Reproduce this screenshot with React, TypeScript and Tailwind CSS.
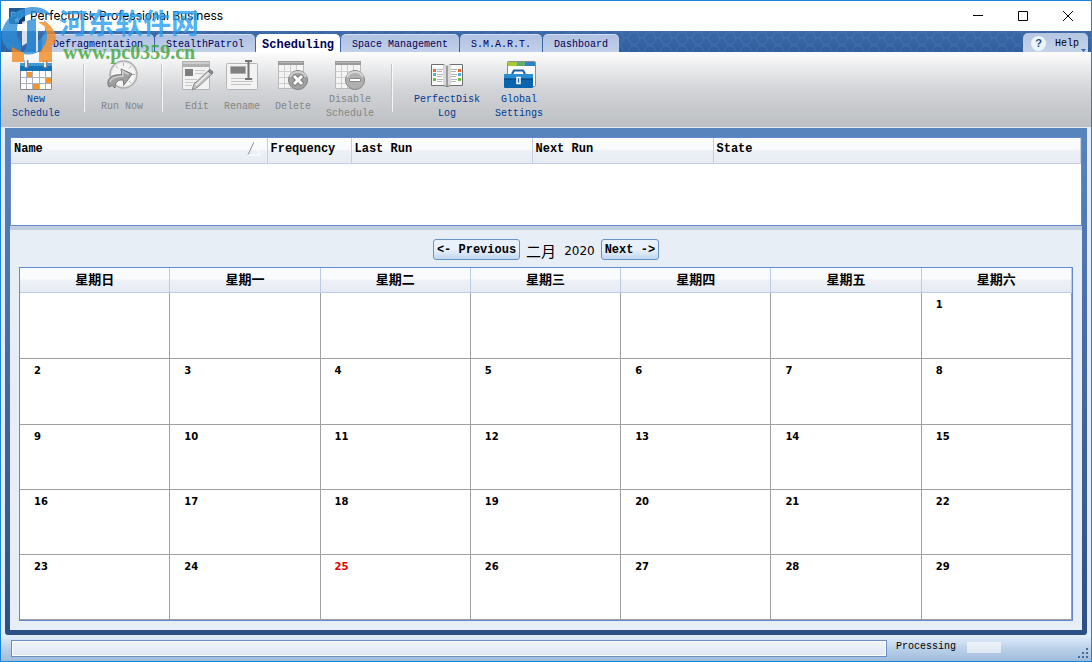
import type { ReactNode } from "react";
import clsx from "clsx";

const tabs = ["Defragmentation", "StealthPatrol", "Scheduling", "Space Management", "S.M.A.R.T.", "Dashboard"];
const weekdays = ["星期日", "星期一", "星期二", "星期三", "星期四", "星期五", "星期六"];
const columns = [
  { label: "Name", width: "w-[256px]" },
  { label: "Frequency", width: "w-[84px]" },
  { label: "Last Run", width: "w-[181px]" },
  { label: "Next Run", width: "w-[181px]" },
  { label: "State", width: "" },
];

// February 2020 starts on a Saturday
const weeks = [0, 1, 2, 3, 4].map((w) => weekdays.map((_, d) => w * 7 + d - 5));
const today = 25;

const headFill = "bg-linear-to-b from-[#fafbfd] from-45% via-[#eef2f7] via-50% to-[#e6ebf3]";

function CalendarSheet() {
  return (
    <>
      <path d="M2.500 3.500h25v25h-25z" fill="#f4f4f4" stroke="#b9b9b9" />
      <path d="M2 1h26v4H2z" fill="#9a9a9a" />
      <path d="M3 2h24v1H3z" fill="#b9b9b9" />
      <path d="M3 11.500h24M3 17.500h24M3 23.500h24M8.500 5v23M14.500 5v23M20.500 5v23" stroke="#cfcfcf" />
    </>
  );
}

function NewIcon() {
  return (
    <svg width="34" height="32" viewBox="0 0 34 32">
      <path d="M1.500 7h31v22.500h-31z" fill="#fff" stroke="#8b8b8b" />
      <path d="M1 3h32v8H1z" fill="#1272b8" />
      <path d="M1 3h32v3H1z" fill="#3f9bd6" />
      <path d="M2 17.500h30M2 23.500h30M7.500 11v18M13.500 11v18M20.500 11v18M26.500 11v18" stroke="#a9b3bd" />
      <path d="M8 12h5v5H8zM27 18h5v5h-5zM14 24h6v5h-6z" fill="#f7942a" />
      <path d="M7.500 0v8M26.500 0v8" stroke="#7d848b" strokeWidth="4" />
      <path d="M7 0v7M26 0v7" stroke="#e8ebee" strokeWidth="2" />
    </svg>
  );
}

function RunIcon() {
  return (
    <svg width="34" height="32" viewBox="0 0 34 32">
      <circle cx="18.500" cy="14.500" r="13.500" fill="#e2e2e2" stroke="#b0b0b0" strokeWidth="1.500" />
      <circle cx="18.500" cy="14.500" r="11.500" fill="#f5f5f5" />
      <path d="M18.500 3v3M18.500 23v3M27 14.500h3M11 6l2 2.500M26 23l-2-2M26 6l-2 2.500" stroke="#b0b0b0" />
      <path d="M4 27C1 22 4 16 11 15l6-.5-1-5.500 11 5-8 11-1-5c-5-.5-8 2-8 8l-3-2.500z" fill="#a0a0a0" stroke="#757575" />
      <path d="M5 22c1-4 5-5.500 13-6l-.5-5 6 3.500" stroke="#cfcfcf" strokeWidth="1.500" fill="none" />
    </svg>
  );
}

function EditIcon() {
  return (
    <svg width="34" height="32" viewBox="0 0 34 32">
      <path d="M2.500 2.500h27v27h-27z" fill="#f2f2f2" stroke="#b5b5b5" />
      <path d="M2 1h28v6H2z" fill="#b0b0b0" />
      <path d="M3 2h26v2H3z" fill="#cdcdcd" />
      <path d="M5 9h8v7H5z" fill="#7d7d7d" />
      <path d="M15 10.500h10M15 13.500h9M5 19.500h12M5 22.500h10M5 25.500h7" stroke="#c9c9c9" />
      <path d="M12 30l2-6 14-13 4 3-14 13z" fill="#c4c4c4" stroke="#8a8a8a" />
      <path d="M28 11l2-1.500 3 2.500-1 2z" fill="#8d8d8d" stroke="#777" />
      <path d="M16 25l13-12" stroke="#efefef" strokeWidth="1.500" />
    </svg>
  );
}

function RenameIcon() {
  return (
    <svg width="34" height="32" viewBox="0 0 34 32">
      <rect x="1.500" y="3.500" width="31" height="26" rx="1" fill="#f3f3f3" stroke="#b5b5b5" />
      <path d="M5.500 6.500h15v7h-15z" fill="#808080" stroke="#b0b0b0" />
      <path d="M6 18.500h22M6 21.500h22M6 24.500h20" stroke="#c4c4c4" />
      <path d="M20 1h7M23.500 1v18M20 19h7" stroke="#757575" strokeWidth="2" fill="none" />
    </svg>
  );
}

function DeleteIcon() {
  return (
    <svg width="34" height="32" viewBox="0 0 34 32">
      <CalendarSheet />
      <circle cx="22" cy="20" r="9.500" fill="#a2a2a2" stroke="#808080" />
      <path d="M14 17a9 9 0 0 1 16 0" stroke="#cfcfcf" strokeWidth="2" fill="none" />
      <path d="M17.500 15.500l9 9M26.500 15.500l-9 9" stroke="#7b7b7b" strokeWidth="5" />
      <path d="M18 16l8 8M26 16l-8 8" stroke="#fff" strokeWidth="3" />
    </svg>
  );
}

function DisableIcon() {
  return (
    <svg width="34" height="32" viewBox="0 0 34 32">
      <CalendarSheet />
      <circle cx="22" cy="20" r="9.500" fill="#b0b0b0" stroke="#858585" />
      <path d="M14 17a9 9 0 0 1 16 0" stroke="#d5d5d5" strokeWidth="2" fill="none" />
      <path d="M16.500 18.500h11v3h-11z" fill="#fff" stroke="#8a8a8a" />
    </svg>
  );
}

function LogIcon() {
  return (
    <svg width="34" height="32" viewBox="0 0 34 32">
      <path d="M1.500 4.500h12l3.500 2 3.500-2h12v21h-12l-3.500 1-3.500-1h-12z" fill="#fbfbfb" stroke="#707070" />
      <path d="M13 5h3v20h-3zM18 5h3v20h-3z" fill="#d9d9d9" />
      <path d="M16 6h2v20h-2z" fill="#9b9b9b" />
      <path d="M7 9.500h6M7 11.500h5M7 14.500h6M7 16.500h5M7 19.500h6M7 21.500h5M21 9.500h6M21 11.500h5M21 14.500h6M21 16.500h5M21 19.500h6M21 21.500h5" stroke="#b5b5b5" />
      <path d="M3 9h3v3H3zM28 9h3v3h-3z" fill="#ee6a33" />
      <path d="M3 13h3v3H3zM28 13h3v3h-3z" fill="#4fb2dd" />
      <path d="M3 18h3v3H3zM28 18h3v3h-3z" fill="#6dba3f" />
    </svg>
  );
}

function SettingsIcon() {
  return (
    <svg width="34" height="32" viewBox="0 0 34 32">
      <rect x="5.500" y="1.500" width="28" height="25" rx="1" fill="#fafafa" stroke="#8c8c8c" />
      <path d="M6 2h12v4H6z" fill="#a9c833" />
      <path d="M15 2h9v4h-9z" fill="#5fae6f" />
      <path d="M23 2h10v4H23z" fill="#2f83c4" />
      <path d="M10 14l2-3.500h9l2 3.500" stroke="#1e5f9d" strokeWidth="2" fill="none" />
      <rect x="2" y="14" width="29" height="14" rx="1" fill="#0a63ad" />
      <path d="M2 14h29v4H2z" fill="#2c8cd0" />
      <path d="M2 19h29v1H2z" fill="#084d89" />
      <path d="M15 17.500h3v6h-3z" fill="#2a6da8" stroke="#fff" strokeWidth="1.500" />
    </svg>
  );
}

type ToolProps = { label: string[]; icon: ReactNode; width: string; disabled?: boolean };

function Tool({ label, icon, width, disabled }: ToolProps) {
  return (
    <button
      disabled={disabled}
      className={clsx("flex shrink-0 flex-col items-center", width, disabled ? "text-[#858585]" : "text-[#003a95]")}
    >
      {icon}
      <span className="mt-px flex h-7 flex-col justify-center text-[10px] leading-[14px]">
        {label.map((line) => (
          <span key={line}>{line}</span>
        ))}
      </span>
    </button>
  );
}

function Separator({ className }: { className: string }) {
  return <div className={clsx("mt-1 h-12 w-[2px] shrink-0 border-l border-[#c3c5c9] bg-white/80", className)} />;
}

function TitleBar() {
  return (
    <header className="flex h-[30px] items-center bg-white pl-2">
      <svg width="16" height="16" viewBox="0 0 16 16" className="shrink-0">
        <rect width="16" height="16" rx="2" fill="#12406f" />
        <path d="M0 0h16v7L0 11z" fill="#1f5a92" />
        <path d="M2.500 10V4.500h3q2 2 0 3h-3M9 4v6h2.500q3-3 0-6z" stroke="#57a3dc" strokeWidth="1.500" fill="none" />
        <path d="M8 9l1 2 2 .3-1.500 1.400.4 2L8 13.700l-2 1 .4-2L5 11.300l2-.3z" fill="#dbe9f5" />
      </svg>
      <h1 className="ml-[5px] flex-1 font-['Inter',sans-serif] text-xs text-black">PerfectDisk Professional Business</h1>
      <button aria-label="Minimize" className="flex h-full w-[45px] items-center justify-center">
        <svg width="10" height="10" viewBox="0 0 10 10" stroke="#000">
          <path d="M0 4.500h10" />
        </svg>
      </button>
      <button aria-label="Maximize" className="flex h-full w-[45px] items-center justify-center">
        <svg width="10" height="10" viewBox="0 0 10 10" stroke="#000" fill="none">
          <path d="M.5.5h9v9h-9z" />
        </svg>
      </button>
      <button aria-label="Close" className="flex h-full w-[46px] items-center justify-center">
        <svg width="10" height="10" viewBox="0 0 10 10" stroke="#000">
          <path d="M0 0l10 10M10 0L0 10" />
        </svg>
      </button>
    </header>
  );
}

function TabBar() {
  return (
    <nav className="relative flex h-[21px] items-end bg-linear-to-b from-[#3b69a8] to-[#305f9f] pl-[41px]">
      <svg className="absolute inset-0 h-full w-full" aria-hidden="true">
        <defs>
          <pattern id="hex" width="16" height="14" patternUnits="userSpaceOnUse">
            <path d="M0 7h3l3-6h6l3 6h1M3 7l3 6h6l3-6" fill="none" stroke="#5485bd" strokeOpacity=".35" />
          </pattern>
        </defs>
        <rect width="100%" height="100%" fill="url(#hex)" />
      </svg>
      <div role="tablist" className="relative flex flex-1 items-end gap-px">
        {tabs.map((tab) => {
          const active = tab === "Scheduling";
          return (
            <button
              key={tab}
              role="tab"
              aria-selected={active}
              className={clsx(
                "h-[18px] shrink-0 rounded-t-[5px] border-t leading-5 text-[#00005a]",
                active
                  ? "border-white bg-white px-[6px] text-xs font-bold"
                  : "border-[#d5dff0] bg-linear-to-b from-[#b0c2e2] to-[#c2d0e9] px-[11px] text-[10px]"
              )}
            >
              {tab}
            </button>
          );
        })}
      </div>
      <button className="relative mr-[3px] flex h-[19px] w-[65px] items-center rounded-t-[5px] bg-linear-to-b from-[#b6c6e2] to-[#c5d2e8] pt-px pl-2 text-[10px] text-black">
        <span className="flex size-[15px] items-center justify-center rounded-full bg-[#edf5fc] font-['Liberation_Sans',sans-serif] text-[11px] font-bold text-[#1f4f85]">
          ?
        </span>
        <span className="ml-[9px]">Help</span>
        <svg width="5" height="3" viewBox="0 0 5 3" className="mt-auto ml-[2px]">
          <path d="M0 0h5L2.500 3z" fill="#2e66ae" />
        </svg>
      </button>
    </nav>
  );
}

function Toolbar() {
  return (
    <div className="flex h-[75px] bg-linear-to-b from-[#fdfdfd] via-[#d2d4d7] via-50% to-[#bcbfc3] pt-2">
      <Tool label={["New", "Schedule"]} icon={<NewIcon />} width="w-[70px]" />
      <Separator className="ml-3" />
      <Tool label={["Run Now"]} icon={<RunIcon />} width="w-[74px]" disabled />
      <Separator className="mr-3 ml-[2px]" />
      <Tool label={["Edit"]} icon={<EditIcon />} width="w-[44px]" disabled />
      <Tool label={["Rename"]} icon={<RenameIcon />} width="w-[46px]" disabled />
      <Tool label={["Delete"]} icon={<DeleteIcon />} width="w-[56px]" disabled />
      <Tool label={["Disable", "Schedule"]} icon={<DisableIcon />} width="w-[58px]" disabled />
      <Separator className="mr-[14px] ml-3" />
      <Tool label={["PerfectDisk", "Log"]} icon={<LogIcon />} width="w-[80px]" />
      <Tool label={["Global", "Settings"]} icon={<SettingsIcon />} width="w-[64px]" />
    </div>
  );
}

function ScheduleList() {
  return (
    <div className="h-[89px] border border-[#6489cf] bg-white">
      <table className="w-full table-fixed border-collapse">
        <thead>
          <tr>
            {columns.map((col) => (
              <th
                key={col.label}
                className={clsx(
                  "h-[25px] border-r border-b border-[#c3d0e2] pb-[2px] pl-[3px] text-left text-xs leading-4 font-bold",
                  headFill,
                  col.width
                )}
              >
                <span className="flex items-center justify-between">
                  {col.label}
                  {col.label === "Name" && (
                    <svg width="14" height="14" viewBox="0 0 14 14" className="mr-[6px]" fill="none">
                      <path d="M1 13L7 0" stroke="#8f8f8f" />
                      <path d="M7 0l6 13H1" stroke="#fff" />
                    </svg>
                  )}
                </span>
              </th>
            ))}
          </tr>
        </thead>
      </table>
    </div>
  );
}

function Calendar() {
  const navButton =
    "h-[21px] rounded-[3px] border border-[#6494c6] bg-linear-to-b from-[#e8f1fc] from-50% to-[#c3d7f0] px-[3px] pt-px text-xs font-bold text-black";
  return (
    <section className="flex-1 border-t-4 border-[#c0cde1] bg-[#e8eef6] px-[9px] pb-[9px]">
      <div className="flex h-[37px] items-center justify-center gap-[6px] pt-[2px]">
        <button className={navButton}>&lt;- Previous</button>
        <h2 className="flex items-center gap-2 pt-[2px] font-['Noto_Sans_CJK_SC',sans-serif] text-[15px] leading-5 font-normal">
          二月 <span className="font-['DejaVu_Sans',sans-serif] text-xs">2020</span>
        </h2>
        <button className={navButton}>Next -&gt;</button>
      </div>
      <table className="w-full table-fixed border-separate border-spacing-0 border border-[#6489cf] bg-white">
        <thead>
          <tr>
            {weekdays.map((day) => (
              <th
                key={day}
                className={clsx(
                  "h-[25px] border-r border-b border-[#bccde3] pt-[2px] text-[13px] leading-5 font-bold",
                  headFill
                )}
              >
                {day}
              </th>
            ))}
          </tr>
        </thead>
        <tbody>
          {weeks.map((week, w) => (
            <tr key={w} className={w < 2 ? "h-[66px]" : "h-[65px]"}>
              {week.map((day, d) => (
                <td
                  key={d}
                  className={clsx(
                    "border-r border-b border-[#a0a0a0] pt-1 pl-[14px] align-top font-['DejaVu_Sans',sans-serif] text-[10px] leading-4 font-bold",
                    day === today && "text-[#e60000]"
                  )}
                >
                  {day > 0 && day}
                </td>
              ))}
            </tr>
          ))}
        </tbody>
      </table>
    </section>
  );
}

function StatusBar() {
  return (
    <footer className="flex h-[26px] items-center bg-linear-to-b from-[#e3effb] via-[#bcd2ea] to-[#9fbcdc] pl-[10px]">
      <div
        role="progressbar"
        aria-label="Progress"
        className="h-[17px] flex-1 border border-[#6c8ebf] bg-linear-to-b from-[#f2f5fa] to-[#dfe7f3] shadow-[inset_0_0_0_1px_white]"
      />
      <span className="mb-[2px] ml-[9px] text-[10px] leading-4">Processing</span>
      <div className="mb-[2px] ml-[11px] h-[11px] w-[34px] bg-linear-to-b from-[#eef3fa] to-[#dfe7f2]" />
      <svg width="10" height="10" viewBox="0 0 10 10" className="mt-auto mr-[3px] mb-[3px] ml-[77px]" fill="#4c6a94">
        <path d="M8 0h2v2H8zM4 4h2v2H4zM8 4h2v2H8zM0 8h2v2H0zM4 8h2v2H4zM8 8h2v2H8z" />
      </svg>
    </footer>
  );
}

function SiteBadge() {
  return (
    <div className="pointer-events-none absolute top-0 left-0 flex">
      <svg width="58" height="64" viewBox="0 0 58 64" opacity=".8" className="shrink-0">
        <path d="M20 14C8 18-1 27 1 37c1 9 8 14 19 16V41c-6-4-5-17 0-27z" fill="#2b8ed8" />
        <path d="M1 30C6 13 23 3 40 7c6 2 9 5 11 9C39 8 21 12 8 28z" fill="#2b8ed8" />
        <path d="M26 20l9-3v24c9-5 11-15 8-22 11 9 8 27-8 33-5 2-10 2-15 0 3-2 6-5 6-9z" fill="#2b8ed8" />
        <path d="M11 46l12 6v9H11zM37 21h8c7 5 11 12 10 21l-4 2v17H38V51c9-7 10-19 5-26z" fill="#f28a24" />
        <path d="M21 21l5-2v23l-5 3zM35 17l2-1v34l-2 1z" fill="#fff" />
      </svg>
      <div className="pt-[9px] whitespace-nowrap">
        <p className="text-[28px] leading-[33px] font-bold text-[#2a9ff0] opacity-80">河东软件网</p>
        <p className="ml-1 font-['Liberation_Serif',serif] text-[20px] leading-[18px] font-bold text-[#3fa535] opacity-80">
          www.pc0359.cn
        </p>
      </div>
    </div>
  );
}

export default function App() {
  return (
    <div className="relative flex min-h-screen flex-col border border-[#1883d7] bg-[#e3ecf7] font-['Liberation_Mono','Noto_Sans_CJK_SC',monospace] text-black">
      <TitleBar />
      <TabBar />
      <Toolbar />
      <main className="mx-1 mt-px flex flex-1 flex-col rounded-b-[3px] bg-linear-to-b from-[#5884be] to-[#2c5084] px-[5px] pt-[9px] pb-[5px]">
        <div className="flex flex-1 flex-col">
          <ScheduleList />
          <Calendar />
        </div>
      </main>
      <StatusBar />
      <SiteBadge />
    </div>
  );
}
